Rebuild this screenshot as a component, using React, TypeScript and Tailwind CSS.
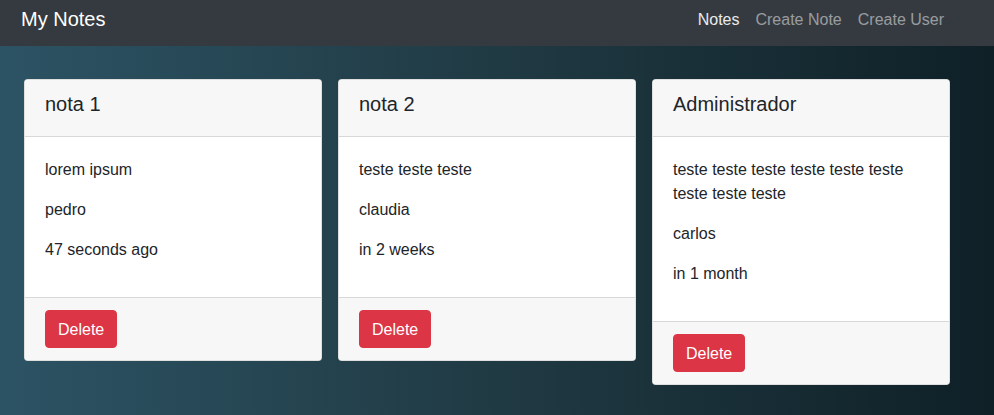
const notes = [
  { title: "nota 1", content: "lorem ipsum", author: "pedro", date: "47 seconds ago" },
  { title: "nota 2", content: "teste teste teste", author: "claudia", date: "in 2 weeks" },
  {
    title: "Administrador",
    content: "teste teste teste teste teste teste teste teste teste",
    author: "carlos",
    date: "in 1 month",
  },
];

function Navbar() {
  return (
    <nav className="h-[46px] bg-[#343a40] flex items-start justify-between pl-[21px] pr-[42px]">
      <a href="#" className="pt-[4px] text-[20px] leading-[30px] text-white">
        My Notes
      </a>
      <ul className="flex pt-[8px]">
        <li>
          <a href="#" className="block px-2 text-[16px] leading-[24px] text-white/90">
            Notes
          </a>
        </li>
        <li>
          <a href="#" className="block px-2 text-[16px] leading-[24px] text-white/50">
            Create Note
          </a>
        </li>
        <li>
          <a href="#" className="block px-2 text-[16px] leading-[24px] text-white/50">
            Create User
          </a>
        </li>
      </ul>
    </nav>
  );
}

function NoteCard({ note }: { note: (typeof notes)[number] }) {
  return (
    <div className="w-[298px] rounded border border-black/[0.125] bg-white overflow-hidden">
      <div className="px-5 py-3 bg-[#f7f7f7] border-b border-black/[0.125]">
        <h5 className="text-[20px] leading-[24px] mb-2">{note.title}</h5>
      </div>
      <div className="px-5 pt-[21px] pb-[19px] text-[16px] leading-[24px]">
        <p className="mb-4">{note.content}</p>
        <p className="mb-4">{note.author}</p>
        <p className="mb-4">{note.date}</p>
      </div>
      <div className="px-5 py-3 bg-[#f7f7f7] border-t border-black/[0.125]">
        <button className="rounded bg-[#dc3545] border border-[#dc3545] text-white px-3 pt-[7px] pb-[5px] text-[16px] leading-[24px]">
          Delete
        </button>
      </div>
    </div>
  );
}

export default function App() {
  return (
    <div className="min-h-screen flex flex-col text-[#212529] font-['Liberation_Sans',Arial,sans-serif]">
      <Navbar />
      <main className="flex-1 bg-[linear-gradient(to_right,#2c5364,#203a43,#0f2027)] pt-[33px] pb-8 pl-[24px]">
        <div className="flex items-start gap-[16px]">
          {notes.map((n) => (
            <NoteCard key={n.title} note={n} />
          ))}
        </div>
      </main>
    </div>
  );
}
